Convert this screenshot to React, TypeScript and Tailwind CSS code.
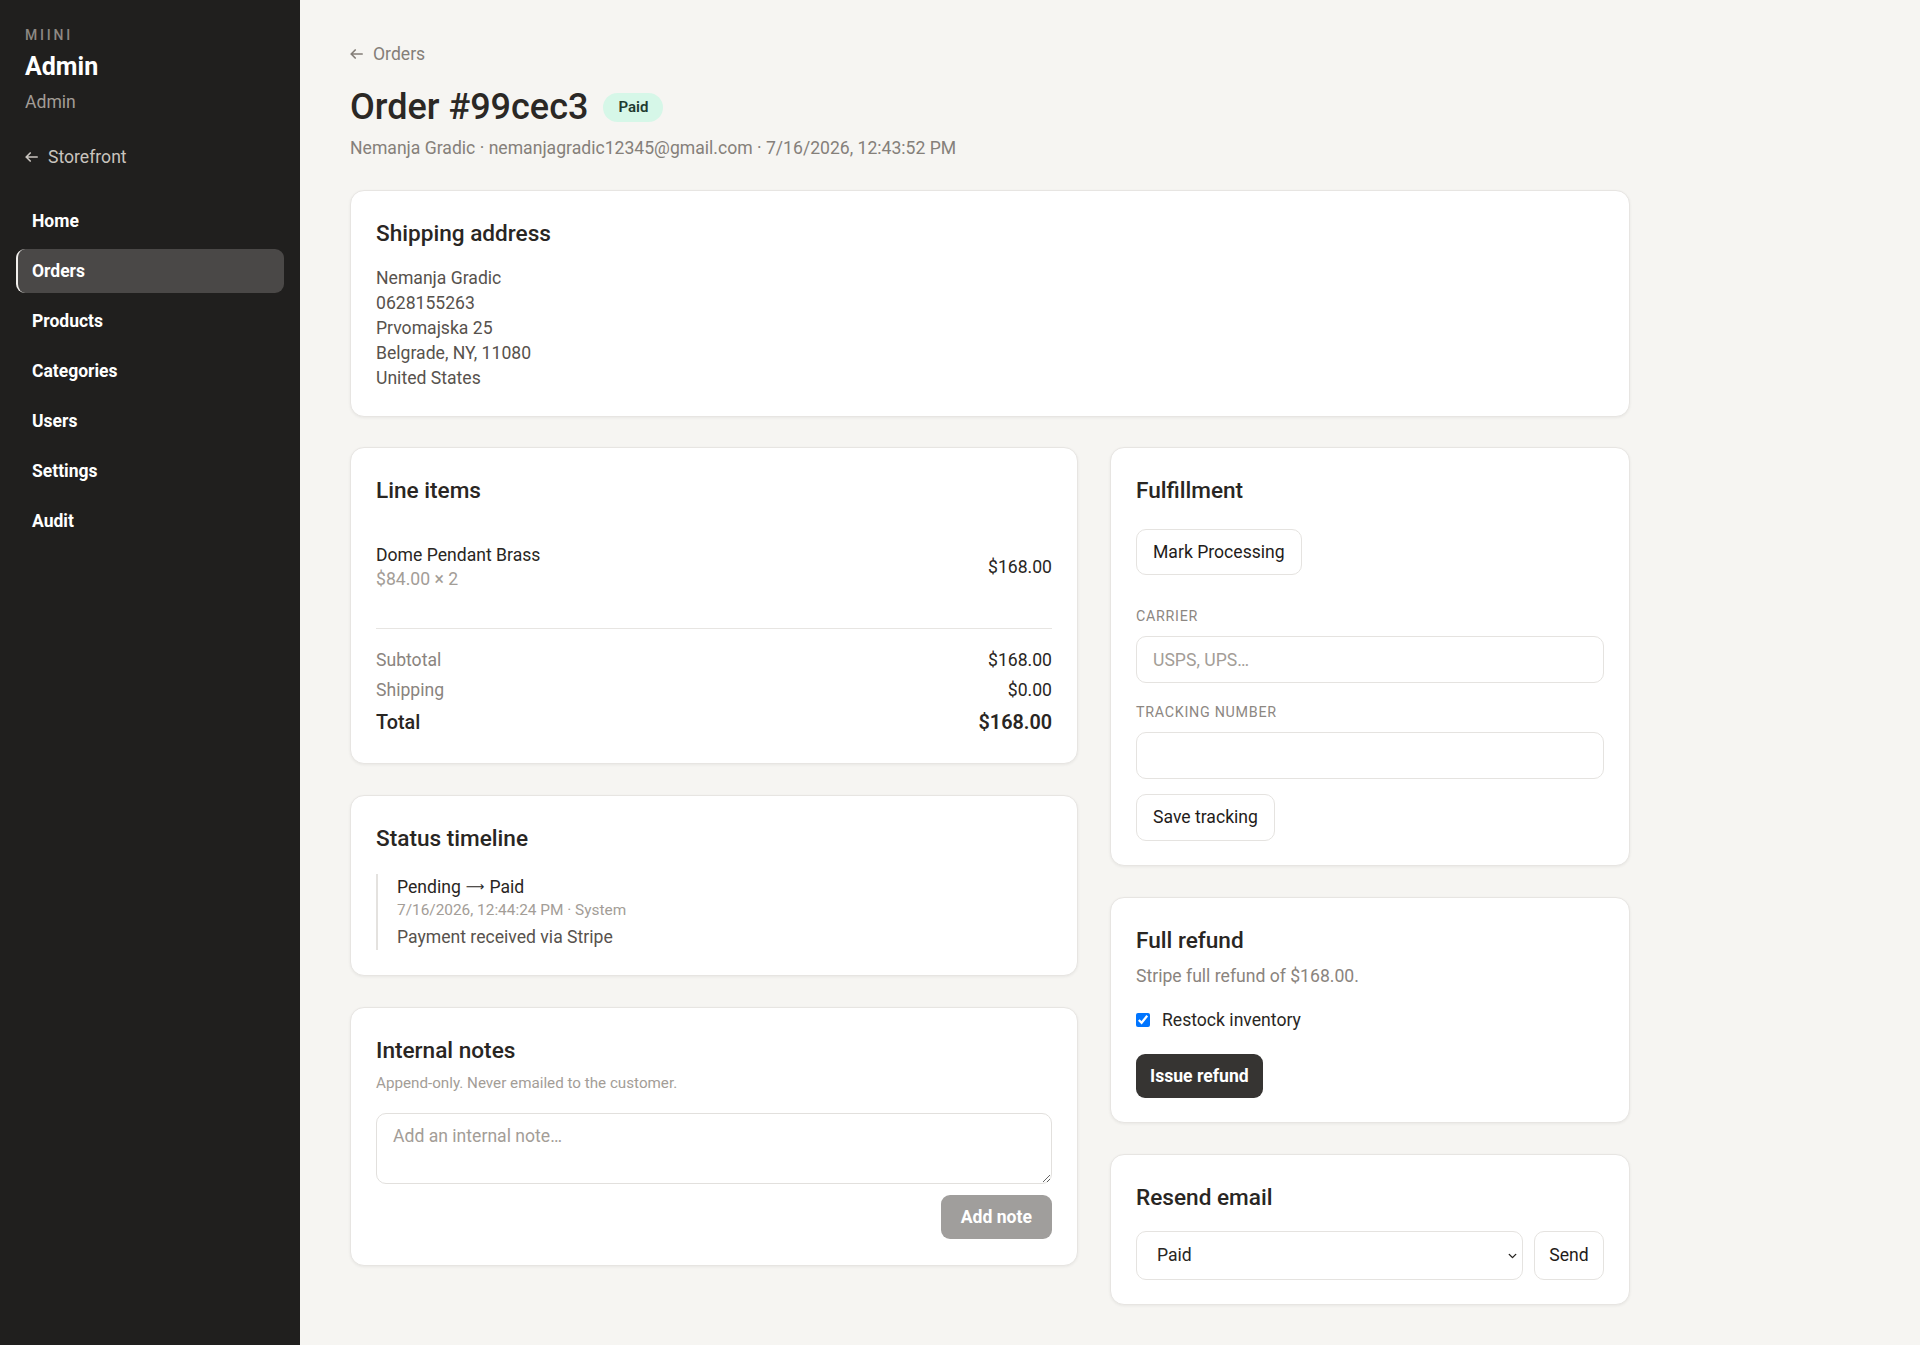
import React from "react";
import { ChevronDown } from "lucide-react";

const navItems = ["Home", "Orders", "Products", "Categories", "Users", "Settings", "Audit"];

function BackArrow({ className = "" }: { className?: string }) {
  return (
    <svg width="13" height="10" viewBox="0 0 13 10" fill="none" className={className}>
      <path
        d="M12.2 5H1.2M5.2 1L1.2 5L5.2 9"
        stroke="currentColor"
        strokeWidth="1.7"
        strokeLinecap="round"
        strokeLinejoin="round"
      />
    </svg>
  );
}

function Card({ children, className = "" }: { children: React.ReactNode; className?: string }) {
  return (
    <div
      className={
        "rounded-[14px] border border-[#e7e5e2] bg-white px-[25px] shadow-[0_1px_3px_rgba(0,0,0,0.06)] " +
        className
      }
    >
      {children}
    </div>
  );
}

function CardTitle({ children }: { children: React.ReactNode }) {
  return <h2 className="text-[22.6px] leading-[33px] font-medium text-[#292623]">{children}</h2>;
}

export default function App() {
  return (
    <div className="flex min-h-[1345px] font-[Roboto,sans-serif] text-[17.6px] text-[#292623]">
      <aside className="w-[300px] shrink-0 bg-[#201f1e]">
        <div className="px-[25px] pt-[26px]">
          <div className="text-[14px] leading-[18px] tracking-[0.2em] text-[#8d8883] font-medium">MIINI</div>
          <div className="mt-[7px] text-[25px] leading-[32px] font-bold text-white">Admin</div>
          <div className="mt-[7px] text-[17.6px] leading-[24px] text-[#a29c96]">Admin</div>
          <div className="mt-[31px] flex items-center gap-[10px] text-[17.6px] leading-[24px] text-[#c9c4bf]">
            <BackArrow className="text-[#c9c4bf]" />
            <span>Storefront</span>
          </div>
        </div>
        <nav className="mt-[30px] flex flex-col gap-[6px] px-4">
          {navItems.map((item) => (
            <div
              key={item}
              className={
                item === "Orders"
                  ? "flex h-[44px] items-center rounded-[9px] border-l-2 border-[#f2f0ed] bg-[#4a4847] pl-[14px] text-[17.5px] font-bold text-white"
                  : "flex h-[44px] items-center rounded-[9px] border-l-2 border-transparent pl-[14px] text-[17.5px] font-bold text-white"
              }
            >
              {item}
            </div>
          ))}
        </nav>
      </aside>

      <main className="flex-1 bg-[#f6f5f2] pl-[50px] pt-[42px] pb-[40px]">
        <div className="w-[1280px]">
          <div className="flex h-6 items-center gap-[10px] text-[17.6px] text-[#847e78]">
            <BackArrow />
            <span>Orders</span>
          </div>
          <div className="mt-[20px] flex items-center gap-[15px]">
            <h1 className="text-[36px] leading-[42px] font-medium text-[#2b2825]">Order #99cec3</h1>
            <span className="flex h-[29px] w-[60px] items-center justify-center rounded-full bg-[#d6f7e8] text-[15px] font-semibold text-[#1f3b30]">
              Paid
            </span>
          </div>
          <div className="mt-[8px] text-[17.6px] leading-[24px] text-[#85807a]">
            Nemanja Gradic · nemanjagradic12345@gmail.com · 7/16/2026, 12:43:52 PM
          </div>

          <div className="mt-[30px] flex flex-col gap-[30px]">
            <Card className="pt-[26px] pb-[25px]">
              <CardTitle>Shipping address</CardTitle>
              <div className="mt-4 leading-[25px] text-[#57524d]">
                <div>Nemanja Gradic</div>
                <div>0628155263</div>
                <div>Prvomajska 25</div>
                <div>Belgrade, NY, 11080</div>
                <div>United States</div>
              </div>
            </Card>

            <div className="grid grid-cols-[728px_520px] items-start gap-x-8">
              <div className="flex flex-col gap-[31px]">
                <Card className="pt-[26px] pb-[26px]">
                  <CardTitle>Line items</CardTitle>
                  <div className="mt-[36px] flex items-center justify-between">
                    <div>
                      <div className="leading-6 text-[#292623]">Dome Pendant Brass</div>
                      <div className="leading-6 text-[#a39d97]">$84.00 × 2</div>
                    </div>
                    <div className="text-[#292623]">$168.00</div>
                  </div>
                  <div className="mt-[37px] border-t border-[#e7e5e2]" />
                  <div className="mt-[19px] flex flex-col">
                    <div className="flex justify-between leading-6">
                      <span className="text-[#8a847e]">Subtotal</span>
                      <span>$168.00</span>
                    </div>
                    <div className="mt-[6px] flex justify-between leading-6">
                      <span className="text-[#8a847e]">Shipping</span>
                      <span>$0.00</span>
                    </div>
                    <div className="mt-[7px] flex justify-between text-[19.8px] leading-7 font-medium">
                      <span>Total</span>
                      <span className="font-semibold">$168.00</span>
                    </div>
                  </div>
                </Card>

                <Card className="pt-[26px] pb-[25px]">
                  <CardTitle>Status timeline</CardTitle>
                  <div className="mt-[19px] border-l-2 border-[#e4e2df] pl-[19px]">
                    <div className="flex items-center gap-[5px] leading-[26px] text-[#292623]">
                      <span>Pending</span>
                      <span className="font-['DejaVu_Sans',sans-serif] text-[13px]">⟶</span>
                      <span>Paid</span>
                    </div>
                    <div className="text-[15.4px] leading-[20px] text-[#a39d97]">
                      7/16/2026, 12:44:24 PM · System
                    </div>
                    <div className="mt-[4px] leading-[26px] text-[#57524d]">Payment received via Stripe</div>
                  </div>
                </Card>

                <Card className="pt-[26px] pb-[26px]">
                  <CardTitle>Internal notes</CardTitle>
                  <div className="mt-[6px] text-[15.2px] leading-[20px] text-[#a39d97]">
                    Append-only. Never emailed to the customer.
                  </div>
                  <textarea
                    placeholder="Add an internal note…"
                    className="mt-[20px] block h-[71px] w-full resize-y rounded-[10px] border border-[#e2e0dd] px-4 py-[10px] text-[17.6px] leading-6 outline-none placeholder:text-[#a39d97]"
                  />
                  <div className="mt-[11px] flex justify-end">
                    <button className="h-[44px] rounded-[9px] bg-[#a09e9c] px-5 text-[17.6px] font-bold text-white">
                      Add note
                    </button>
                  </div>
                </Card>
              </div>

              <div className="flex flex-col gap-[31px]">
                <Card className="pt-[26px] pb-[24px]">
                  <CardTitle>Fulfillment</CardTitle>
                  <button className="mt-[22px] h-[46px] rounded-[10px] border border-[#e5e3e0] bg-white px-4 text-[17.6px] text-[#1f1c1a]">
                    Mark Processing
                  </button>
                  <div className="mt-[31px] text-[14.3px] leading-[20px] tracking-[0.05em] text-[#8d8782] uppercase">
                    Carrier
                  </div>
                  <input
                    placeholder="USPS, UPS…"
                    className="mt-[10px] block h-[47px] w-full rounded-[10px] border border-[#e5e3e0] px-4 text-[17.6px] outline-none placeholder:text-[#a39d97]"
                  />
                  <div className="mt-[19px] text-[14.3px] leading-[20px] tracking-[0.05em] text-[#8d8782] uppercase">
                    Tracking number
                  </div>
                  <input className="mt-[10px] block h-[47px] w-full rounded-[10px] border border-[#e5e3e0] px-4 text-[17.6px] outline-none" />
                  <button className="mt-[15px] h-[47px] rounded-[10px] border border-[#e5e3e0] bg-white px-4 text-[17.6px] text-[#1f1c1a]">
                    Save tracking
                  </button>
                </Card>

                <Card className="pt-[26px] pb-[24px]">
                  <CardTitle>Full refund</CardTitle>
                  <div className="mt-[7px] leading-6 text-[#8a847e]">Stripe full refund of $168.00.</div>
                  <label className="mt-[20px] flex h-6 items-center gap-[12px] text-[#292623]">
                    <input type="checkbox" defaultChecked className="m-0 h-[14px] w-[14px]" />
                    <span>Restock inventory</span>
                  </label>
                  <button className="mt-[22px] h-[44px] rounded-[9px] bg-[#363432] px-[14px] text-[17.6px] font-bold text-white">
                    Issue refund
                  </button>
                </Card>

                <Card className="pt-[26px] pb-[24px]">
                  <CardTitle>Resend email</CardTitle>
                  <div className="mt-[17px] flex gap-[11px]">
                    <div className="relative flex-1">
                      <select className="block h-[49px] w-full appearance-none rounded-[10px] border border-[#e5e3e0] bg-white pl-[20px] text-[17.6px] text-[#292623] outline-none">
                        <option>Paid</option>
                      </select>
                      <ChevronDown
                        size={13}
                        strokeWidth={2.6}
                        className="pointer-events-none absolute top-1/2 right-[4px] -translate-y-1/2 text-[#292623]"
                      />
                    </div>
                    <button className="h-[49px] w-[70px] rounded-[10px] border border-[#e5e3e0] bg-white text-[17.6px] text-[#1f1c1a]">
                      Send
                    </button>
                  </div>
                </Card>
              </div>
            </div>
          </div>
        </div>
      </main>
    </div>
  );
}
